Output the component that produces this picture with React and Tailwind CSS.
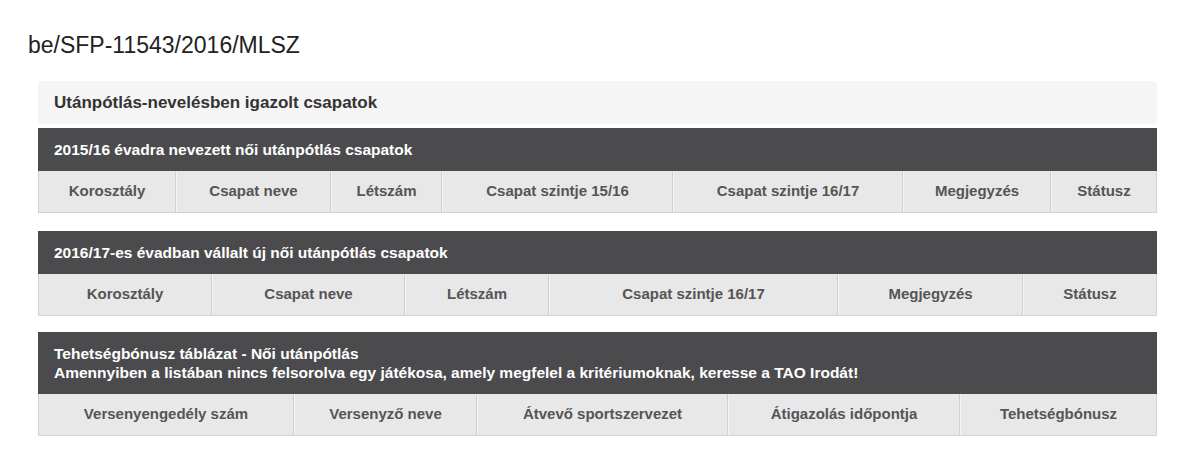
import React from "react";

function HeaderRow({ cols }) {
  return (
    <div className="flex h-[42px] border border-t-0 border-[#d3d3d3] bg-[#e8e8e8]">
      {cols.map(([label, w], i) => (
        <div
          key={label}
          style={{ width: w }}
          className={
            "flex shrink-0 items-center justify-center text-[15px] font-bold text-[#555] " +
            (i < cols.length - 1 ? "border-r border-[#d0d0d0] " : "flex-1 ") +
            (i > 0 ? "border-l border-l-[#f4f4f4]" : "")
          }
        >
          {label}
        </div>
      ))}
    </div>
  );
}

function Table({ title, cols, className = "" }) {
  return (
    <div className={className}>
      <div className="bg-[#4b4b4d] px-[16px] py-[12px] text-[15.5px] font-bold leading-[19px] text-white">
        {title}
      </div>
      <HeaderRow cols={cols} />
    </div>
  );
}

export default function App() {
  return (
    <div
      className="min-h-[465px] w-[1181px] bg-white pt-[32px]"
      style={{ fontFamily: '"Liberation Sans", Arial, sans-serif' }}
    >
      <div className="pl-[28px] text-[23px] leading-[26px] text-[#222]">
        be/SFP-11543/2016/MLSZ
      </div>
      <div className="ml-[38px] mr-[24px] mt-[23px]">
        <div className="flex h-[43px] items-center rounded-[4px] bg-[#f5f5f5] pl-[16px] text-[17px] font-bold text-[#333]">
          Utánpótlás-nevelésben igazolt csapatok
        </div>
        <Table
          className="mt-[4px]"
          title="2015/16 évadra nevezett női utánpótlás csapatok"
          cols={[
            ["Korosztály", 137],
            ["Csapat neve", 155],
            ["Létszám", 111],
            ["Csapat szintje 15/16", 231],
            ["Csapat szintje 16/17", 230],
            ["Megjegyzés", 148],
            ["Státusz", 107],
          ]}
        />
        <Table
          className="mt-[18px]"
          title="2016/17-es évadban vállalt új női utánpótlás csapatok"
          cols={[
            ["Korosztály", 173],
            ["Csapat neve", 193],
            ["Létszám", 144],
            ["Csapat szintje 16/17", 289],
            ["Megjegyzés", 185],
            ["Státusz", 135],
          ]}
        />
        <Table
          className="mt-[16px]"
          title={
            <>
              Tehetségbónusz táblázat - Női utánpótlás
              <br />
              Amennyiben a listában nincs felsorolva egy játékosa, amely megfelel a kritériumoknak, keresse a TAO Irodát!
            </>
          }
          cols={[
            ["Versenyengedély szám", 255],
            ["Versenyző neve", 183],
            ["Átvevő sportszervezet", 251],
            ["Átigazolás időpontja", 232],
            ["Tehetségbónusz", 198],
          ]}
        />
      </div>
    </div>
  );
}
